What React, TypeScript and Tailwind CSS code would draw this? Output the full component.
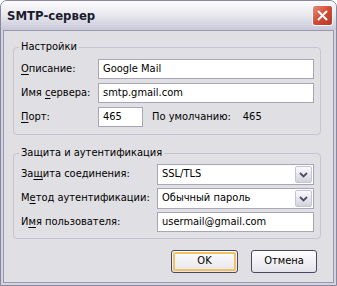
import React from "react";

const font = { fontFamily: "Tahoma, 'DejaVu Sans Condensed', 'Liberation Sans', sans-serif" };

function U({ children }: { children: React.ReactNode }) {
  return <span className="underline underline-offset-[2px]">{children}</span>;
}

function Input({ value, className = "" }: { value: string; className?: string }) {
  return (
    <div className={`h-[20px] bg-white border border-[#a7a6b8] flex items-center pl-[4px] text-[11px] text-black ${className}`}>
      {value}
    </div>
  );
}

function Select({ value }: { value: string }) {
  return (
    <div className="h-[21px] w-[157px] bg-white border border-[#a7a6b8] flex items-center justify-between pl-[4px] pr-[1px] text-[11px] text-black">
      <span>{value}</span>
      <div className="w-[17px] h-[17px] rounded-[2px] border border-[#c3c3d3] bg-gradient-to-b from-[#fbfbfd] to-[#d3d3de] flex items-center justify-center">
        <svg width="9" height="6" viewBox="0 0 9 6">
          <path d="M1 1 L4.5 4.5 L8 1" fill="none" stroke="#4d4d6b" strokeWidth="1.8" />
        </svg>
      </div>
    </div>
  );
}

function GroupBox({ title, children, className = "" }: { title: string; children: React.ReactNode; className?: string }) {
  return (
    <div className={`relative border border-[#c5c4cf] rounded-[4px] ${className}`}>
      <div className="absolute -top-[8px] left-[5px] px-[2px] bg-[#e0dfe3] text-[11px] leading-[14px] text-black">{title}</div>
      {children}
    </div>
  );
}

export default function App() {
  return (
    <div className="w-[337px] h-[286px] bg-white" style={font}>
      <div className="w-[337px] h-[286px] flex flex-col rounded-t-[7px] border border-[#8887a0] bg-[#d4d3e0] overflow-hidden">
        <div className="h-[29px] shrink-0 flex items-center justify-between pl-[6px] pr-[3px] bg-gradient-to-b from-[#fdfdfe] via-[#e7e7ee] to-[#c9c8d8]">
          <span className="text-[13px] font-bold text-[#1b1b2b]">SMTP-сервер</span>
          <div className="w-[21px] h-[21px] rounded-[3px] border border-white bg-gradient-to-br from-[#e88a74] via-[#d24a33] to-[#b83a26] flex items-center justify-center">
            <svg width="11" height="11" viewBox="0 0 11 11">
              <path d="M1.5 1.5 L9.5 9.5 M9.5 1.5 L1.5 9.5" stroke="white" strokeWidth="2" strokeLinecap="round" />
            </svg>
          </div>
        </div>
        <div className="flex-1 mx-[2px] mb-[2px] border border-[#9897ae] bg-[#e0dfe3] flex flex-col pl-[9px] pr-[12px] pt-[16px] text-[11px] text-black">
          <GroupBox title="Настройки" className="h-[88px]">
            <div className="flex flex-col gap-[4px] pt-[11px] pl-[7px] pr-[6px]">
              <div className="flex items-center">
                <span className="w-[77px]"><U>О</U>писание:</span>
                <Input value="Google Mail" className="flex-1" />
              </div>
              <div className="flex items-center">
                <span className="w-[77px]">Имя <U>с</U>ервера:</span>
                <Input value="smtp.gmail.com" className="flex-1" />
              </div>
              <div className="flex items-center">
                <span className="w-[77px]"><U>П</U>орт:</span>
                <Input value="465" className="w-[45px]" />
                <span className="ml-[9px]">По умолчанию:</span>
                <span className="ml-[12px]">465</span>
              </div>
            </div>
          </GroupBox>
          <GroupBox title="Защита и аутентификация" className="h-[86px] mt-[18px]">
            <div className="flex flex-col gap-[3px] pt-[10px] pl-[7px] pr-[6px]">
              <div className="flex items-center justify-between">
                <span>За<U>щ</U>ита соединения:</span>
                <Select value="SSL/TLS" />
              </div>
              <div className="flex items-center justify-between">
                <span>М<U>е</U>тод аутентификации:</span>
                <Select value="Обычный пароль" />
              </div>
              <div className="flex items-center justify-between">
                <span>И<U>м</U>я пользователя:</span>
                <Input value="usermail@gmail.com" className="w-[157px]" />
              </div>
            </div>
          </GroupBox>
          <div className="flex justify-end gap-[13px] mt-[11px] pr-[4px]">
            <div className="w-[67px] h-[23px] rounded-[3px] border border-[#474761] bg-gradient-to-b from-[#ffffff] to-[#e3e3ea] p-[1px]">
              <div className="w-full h-full rounded-[2px] border-[2px] border-[#f5c060] flex items-center justify-center">OK</div>
            </div>
            <div className="w-[66px] h-[23px] rounded-[3px] border border-[#474761] bg-gradient-to-b from-[#ffffff] to-[#e3e3ea] flex items-center justify-center">
              Отмена
            </div>
          </div>
        </div>
      </div>
    </div>
  );
}
